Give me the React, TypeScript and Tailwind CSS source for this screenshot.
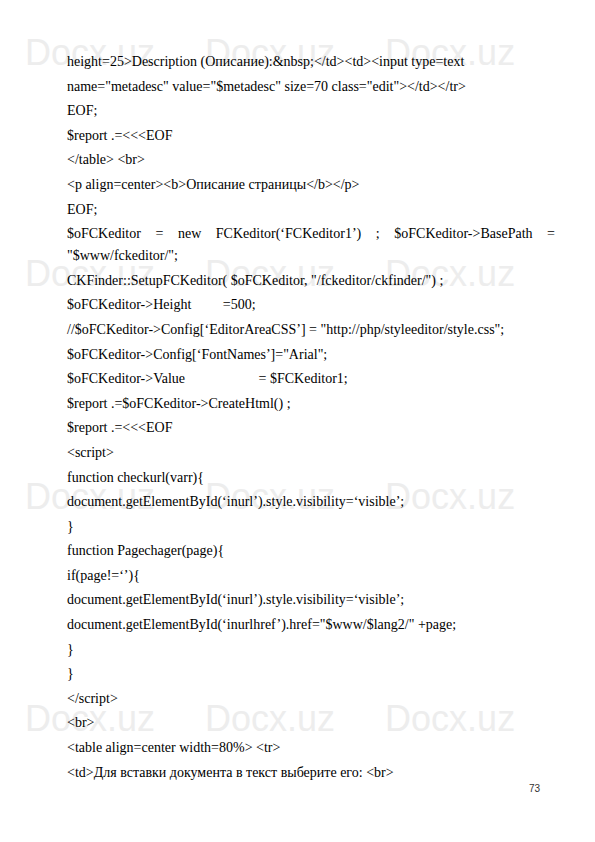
// App.tsx
const lines: { text: string; justify?: boolean }[] = [
  { text: 'height=25>Description (Описание):&nbsp;</td><td><input type=text' },
  { text: 'name="metadesc" value="$metadesc" size=70 class="edit"></td></tr>' },
  { text: "EOF;" },
  { text: "$report .=<<<EOF" },
  { text: "</table> <br>" },
  { text: "<p align=center><b>Описание страницы</b></p>" },
  { text: "EOF;" },
  {
    text: "$oFCKeditor = new FCKeditor(‘FCKeditor1’) ; $oFCKeditor->BasePath = \"$www/fckeditor/\";",
    justify: true,
  },
  { text: 'CKFinder::SetupFCKeditor( $oFCKeditor, "/fckeditor/ckfinder/") ;' },
  { text: "$oFCKeditor->Height\u00a0\u00a0\u00a0\u00a0\u00a0\u00a0\u00a0\u00a0\u00a0=500;" },
  { text: "//$oFCKeditor->Config[‘EditorAreaCSS’] = \"http://php/styleeditor/style.css\";" },
  { text: "$oFCKeditor->Config[‘FontNames’]=\"Arial\";" },
  {
    text:
      "$oFCKeditor->Value\u00a0\u00a0\u00a0\u00a0\u00a0\u00a0\u00a0\u00a0\u00a0\u00a0\u00a0\u00a0\u00a0\u00a0\u00a0\u00a0\u00a0\u00a0\u00a0\u00a0\u00a0= $FCKeditor1;",
  },
  { text: "$report .=$oFCKeditor->CreateHtml() ;" },
  { text: "$report .=<<<EOF" },
  { text: "<script>" },
  { text: "function checkurl(varr){" },
  { text: "document.getElementById(‘inurl’).style.visibility=‘visible’;" },
  { text: "}" },
  { text: "function Pagechager(page){" },
  { text: "if(page!=‘’){" },
  { text: "document.getElementById(‘inurl’).style.visibility=‘visible’;" },
  { text: "document.getElementById(‘inurlhref’).href=\"$www/$lang2/\" +page;" },
  { text: "}" },
  { text: "}" },
  { text: "</script>" },
  { text: "<br>" },
  { text: "<table align=center width=80%> <tr>" },
  { text: "<td>Для вставки документа в текст выберите его: <br>" },
];

// faint "Docx.uz" watermark behind the page text
function Watermark() {
  const rows = [35, 256, 479, 701];
  return (
    <div className="pointer-events-none absolute inset-0 select-none">
      {rows.map((top) => (
        <div
          key={top}
          className="absolute left-[25px] flex gap-[50px] text-[36px] leading-none text-[#ededed] font-['Liberation_Sans',Arial,sans-serif]"
          style={{ top }}
        >
          <span>Docx.uz</span>
          <span>Docx.uz</span>
          <span>Docx.uz</span>
        </div>
      ))}
    </div>
  );
}

export default function App() {
  return (
    <div className="relative w-[595px] h-[842px] bg-white overflow-hidden">
      <Watermark />
      <div className="relative pl-[67px] pt-[51px] w-[555px] text-[14px] text-black font-['Liberation_Serif','Times_New_Roman',serif]">
        {lines.map((l, i) => (
          <p
            key={i}
            className={
              l.justify
                ? "leading-[22px] mb-[2.6px] text-justify [text-align-last:left]"
                : "leading-[22px] mb-[2.6px] whitespace-pre"
            }
          >
            {l.text}
          </p>
        ))}
      </div>
      <div className="absolute right-[55px] top-[781px] text-[10px] text-[#333] font-['Liberation_Sans',Arial,sans-serif]">
        73
      </div>
    </div>
  );
}
